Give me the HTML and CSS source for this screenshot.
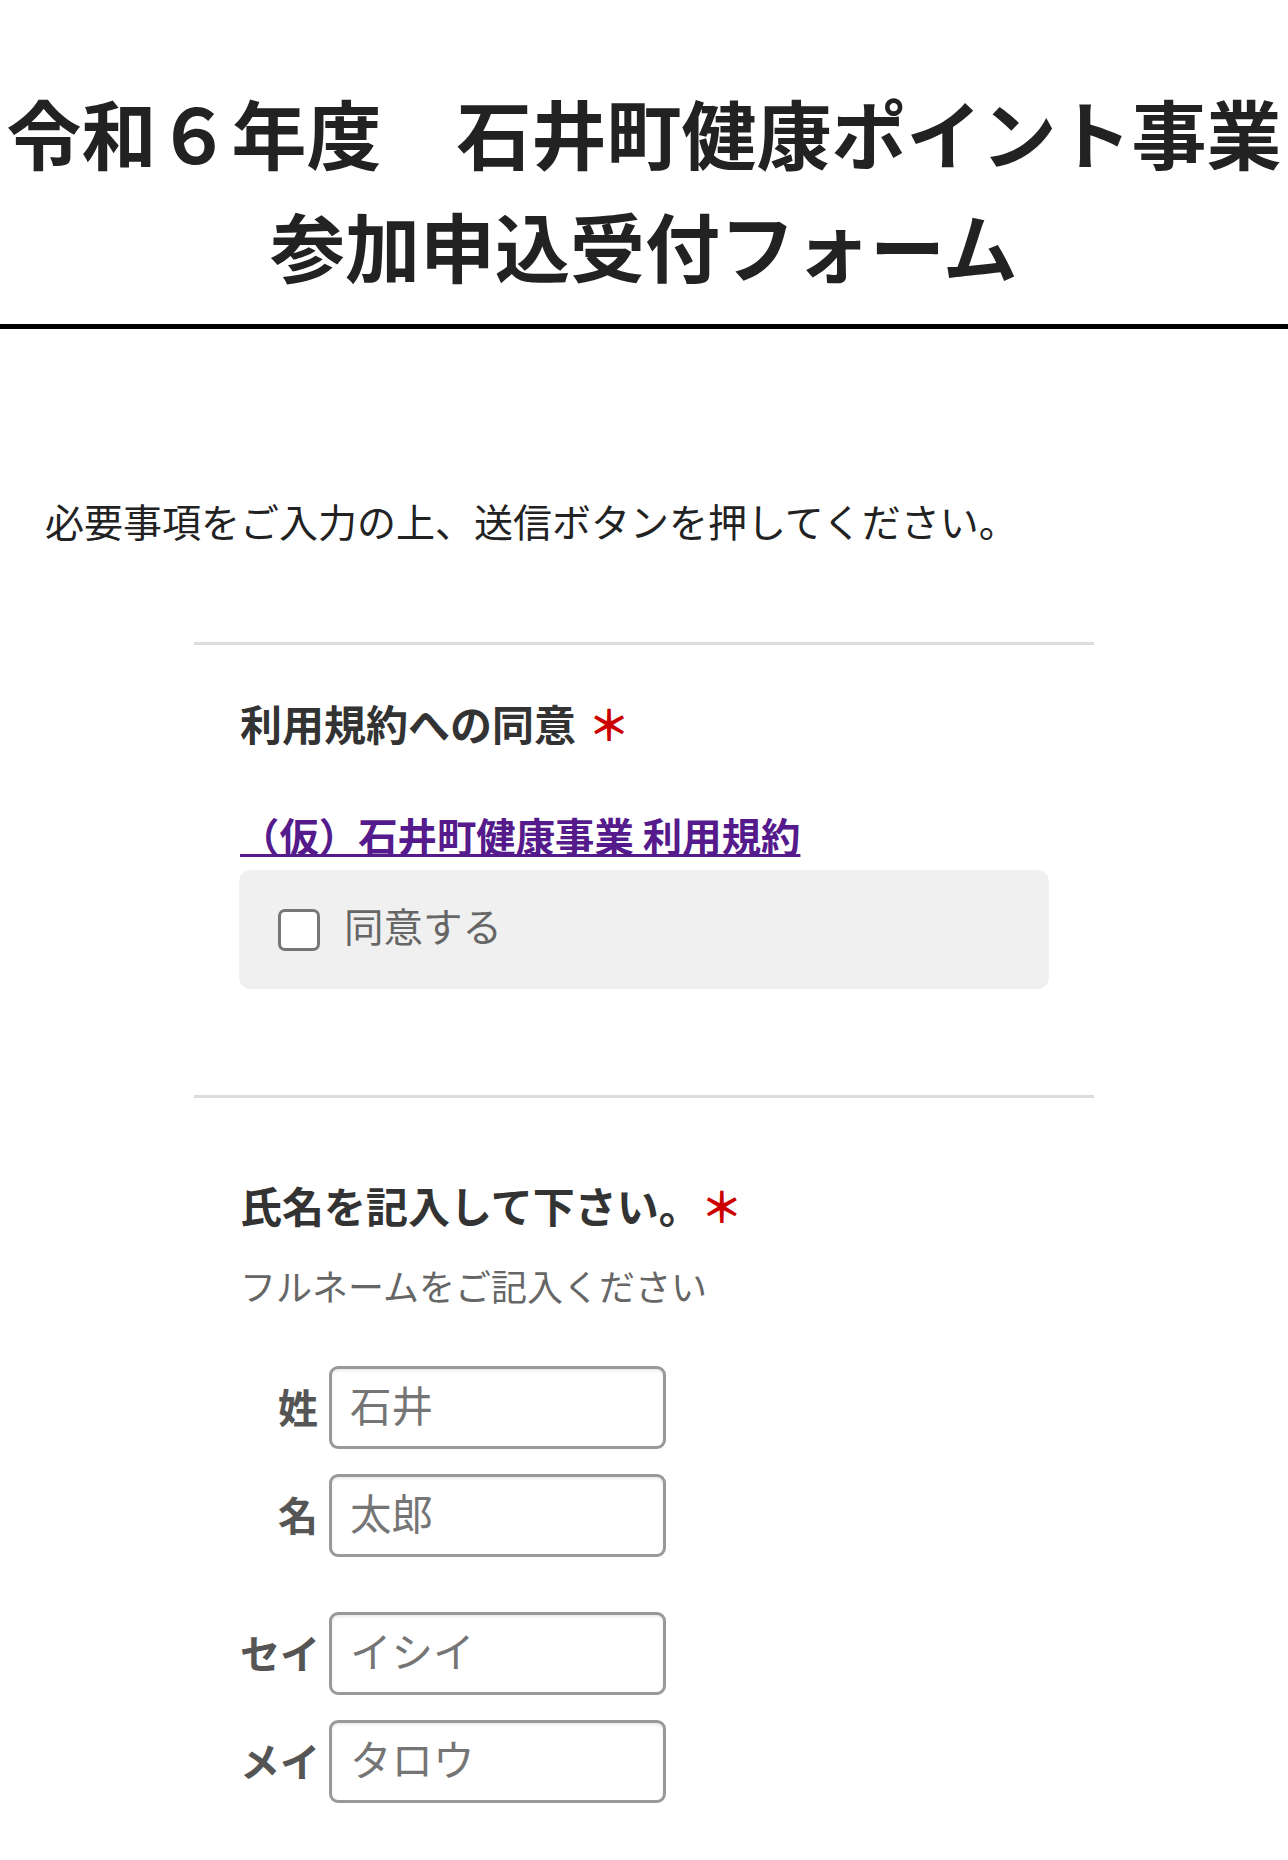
FILE: index.html
```html
<!DOCTYPE html>
<html lang="ja">
<head>
<meta charset="utf-8">
<title>参加申込受付フォーム</title>
<link rel="stylesheet" href="styles.css">
</head>
<body>
<header class="masthead">
  <h1 class="masthead-title">令和６年度　石井町健康ポイント事業<br>参加申込受付フォーム</h1>
</header>
<main class="page">
  <p class="lead">必要事項をご入力の上、送信ボタンを押してください。</p>

  <section class="question question-terms">
    <h2 class="question-title">利用規約への同意<span class="req">＊</span></h2>
    <a class="terms-link" href="#">（仮）石井町健康事業 利用規約</a>
    <label class="choice">
      <input class="choice-box" type="checkbox">
      <span class="choice-text">同意する</span>
    </label>
  </section>

  <section class="question question-name">
    <h2 class="question-title">氏名を記入して下さい。<span class="req req-tight">＊</span></h2>
    <p class="question-help">フルネームをご記入ください</p>
    <div class="name-group">
      <div class="name-row">
        <span class="name-label">姓</span>
        <input class="name-input" type="text" placeholder="石井">
      </div>
      <div class="name-row">
        <span class="name-label">名</span>
        <input class="name-input" type="text" placeholder="太郎">
      </div>
    </div>
    <div class="name-group">
      <div class="name-row">
        <span class="name-label">セイ</span>
        <input class="name-input" type="text" placeholder="イシイ">
      </div>
      <div class="name-row">
        <span class="name-label">メイ</span>
        <input class="name-input" type="text" placeholder="タロウ">
      </div>
    </div>
  </section>
</main>
</body>
</html>
```

FILE: styles.css
```css
* {
  box-sizing: border-box;
}

html, body {
  margin: 0;
  padding: 0;
  background: #fff;
}

body {
  font-family: "Noto Sans CJK JP", "Noto Sans", sans-serif;
  color: #333;
}

.masthead {
  padding: 75px 0 23px;
  border-bottom: 5px solid #000;
}

.masthead-title {
  margin: 0;
  font-size: 75px;
  line-height: 113px;
  font-weight: 700;
  color: #222;
  text-align: center;
  white-space: nowrap;
}

.page {
  padding: 0 0 60px;
}

.lead {
  margin: 161px 0 92px;
  padding-left: 45px;
  font-size: 39px;
  line-height: 60px;
  color: #222;
}

.question {
  width: 900px;
  margin: 0 auto;
  border-top: 3px solid #ddd;
  padding: 48px 45px 106px 46px;
}

.question-name {
  padding-top: 77px;
  padding-bottom: 40px;
}

.question-title {
  margin: 0;
  font-size: 42px;
  line-height: 60px;
  font-weight: 700;
  color: #333;
}

.req {
  margin-left: 12px;
  color: #c00;
  font-weight: 700;
}

.req-tight {
  margin-left: 0;
}

.terms-link {
  display: inline-block;
  margin-top: 57px;
  font-size: 39.4px;
  line-height: 50px;
  font-weight: 700;
  color: #551a8b;
  text-decoration: underline;
  text-decoration-thickness: 3px;
  text-underline-offset: 2px;
}

.choice {
  display: flex;
  align-items: center;
  gap: 24px;
  height: 119px;
  margin: 10px 0 0 -1px;
  padding-left: 39px;
  background: #f0f0f0;
  border-radius: 12px;
}

.choice-box {
  appearance: none;
  -webkit-appearance: none;
  margin: 0;
  width: 42px;
  height: 42px;
  background: #fff;
  border: 3px solid #767676;
  border-radius: 7px;
}

.choice-text {
  padding-bottom: 9px;
  font-size: 39.5px;
  line-height: 50px;
  color: #666;
}

.question-help {
  margin: 25px 0 0;
  font-size: 36px;
  line-height: 50px;
  color: #666;
}

.name-group {
  display: flex;
  flex-direction: column;
  gap: 25px;
  margin-top: 56px;
}

.name-group + .name-group {
  margin-top: 55px;
}

.name-row {
  display: flex;
  align-items: center;
}

.name-label {
  width: 78px;
  margin-right: 11px;
  padding-bottom: 4px;
  text-align: right;
  font-size: 40px;
  line-height: 50px;
  font-weight: 700;
  color: #555;
  white-space: nowrap;
}

.name-input {
  width: 337px;
  height: 83px;
  margin: 0;
  padding: 0 16px 8px 18px;
  font-family: "Noto Sans CJK JP", "Noto Sans", sans-serif;
  font-size: 41.5px;
  color: #333;
  background: #fff;
  border: 3px solid #999;
  border-radius: 9px;
  box-shadow: inset 0 2px 3px rgba(0, 0, 0, 0.08);
  outline: none;
}

.name-input::placeholder {
  color: #757575;
}
```
